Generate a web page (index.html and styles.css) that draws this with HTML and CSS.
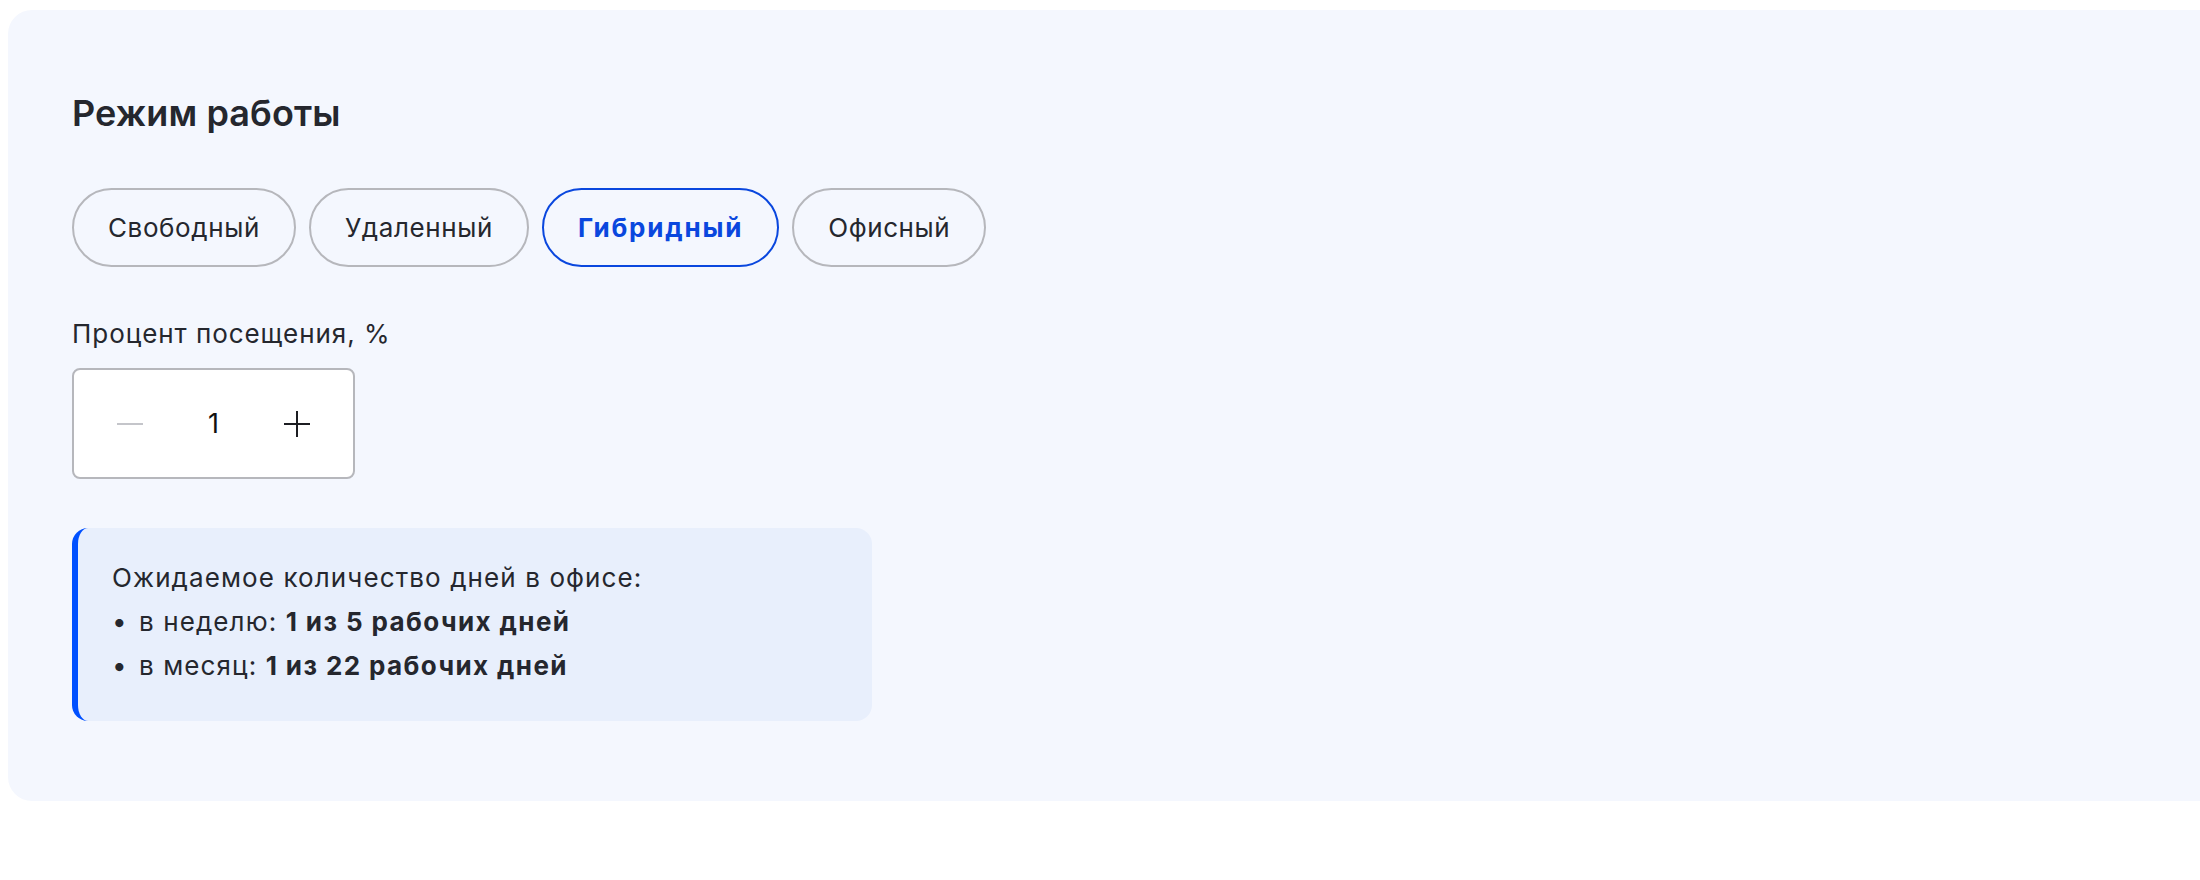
FILE: index.html
```html
<!DOCTYPE html>
<html lang="ru">
<head>
    <meta charset="UTF-8">
    <meta name="viewport" content="width=device-width, initial-scale=1.0">
    <title>Режим работы</title>
    <link rel="stylesheet" href="styles.css">
</head>
<body>
    <div class="work-card">
        <h2 class="work-title">Режим работы</h2>

        <div class="mode-list">
            <button class="mode-btn">Свободный</button>
            <button class="mode-btn">Удаленный</button>
            <button class="mode-btn active">Гибридный</button>
            <button class="mode-btn">Офисный</button>
        </div>

        <div class="field-label">Процент посещения, %</div>
        <div class="stepper">
            <button class="step-btn disabled" aria-label="Уменьшить">
                <svg width="28" height="28" viewBox="0 0 28 28"><path d="M1 14h26" stroke="#c4c5ca" stroke-width="2" fill="none"/></svg>
            </button>
            <span class="step-value">1</span>
            <button class="step-btn" aria-label="Увеличить">
                <svg width="28" height="28" viewBox="0 0 28 28"><path d="M1 14h26M14 1v26" stroke="#1c1d22" stroke-width="2" fill="none"/></svg>
            </button>
        </div>

        <div class="info-box">
            <p>Ожидаемое количество дней в офисе:</p>
            <ul>
                <li>в неделю: <b>1 из 5 рабочих дней</b></li>
                <li>в месяц: <b>1 из 22 рабочих дней</b></li>
            </ul>
        </div>
    </div>
</body>
</html>
```

FILE: styles.css
```css
body {
    margin: 0;
    padding: 10px 0 0 8px;
    background: #ffffff;
    font-family: Inter, 'Noto Sans', sans-serif;
    color: #25272e;
}

.work-card {
    background: #f4f7fe;
    border-radius: 24px 0 0 24px;
    padding: 81px 64px 80px 64px;
}

.work-title {
    margin: 0;
    font-size: 36px;
    line-height: 44px;
    font-weight: 600;
    letter-spacing: 0.1px;
}

.mode-list {
    display: flex;
    gap: 13px;
    margin-top: 53px;
}

.mode-btn {
    height: 79px;
    padding: 0 34px;
    border: 2px solid #b6b7bc;
    border-radius: 40px;
    background: transparent;
    font-family: inherit;
    font-size: 26px;
    color: #25272e;
    letter-spacing: 0.6px;
    cursor: pointer;
}

.mode-btn.active {
    border-color: #0a47de;
    color: #0a47de;
    font-weight: 700;
    letter-spacing: 1.8px;
}

.field-label {
    margin-top: 49px;
    font-size: 26px;
    line-height: 36px;
    letter-spacing: 0.95px;
}

.stepper {
    display: flex;
    align-items: center;
    justify-content: space-between;
    box-sizing: border-box;
    width: 283px;
    height: 111px;
    margin-top: 16px;
    padding: 0 42px;
    background: #ffffff;
    border: 2px solid #b6b7bc;
    border-radius: 8px;
}

.step-btn {
    display: flex;
    padding: 0;
    border: none;
    background: none;
    cursor: pointer;
}

.step-btn.disabled {
    cursor: default;
}

.step-value {
    font-size: 27px;
    color: #111;
}

.info-box {
    width: 800px;
    box-sizing: border-box;
    margin-top: 49px;
    padding: 28px 34px 33px 34px;
    background: #e8effc;
    border-left: 6px solid #0050ff;
    border-radius: 16px;
    font-size: 26px;
    line-height: 44px;
    letter-spacing: 1.1px;
}

.info-box p {
    margin: 0;
}

.info-box ul {
    margin: 0;
    padding: 0;
    list-style: none;
}

.info-box li::before {
    content: "•";
    display: inline-block;
    width: 27px;
}

.info-box b {
    font-weight: 700;
    letter-spacing: 1.4px;
}
```
